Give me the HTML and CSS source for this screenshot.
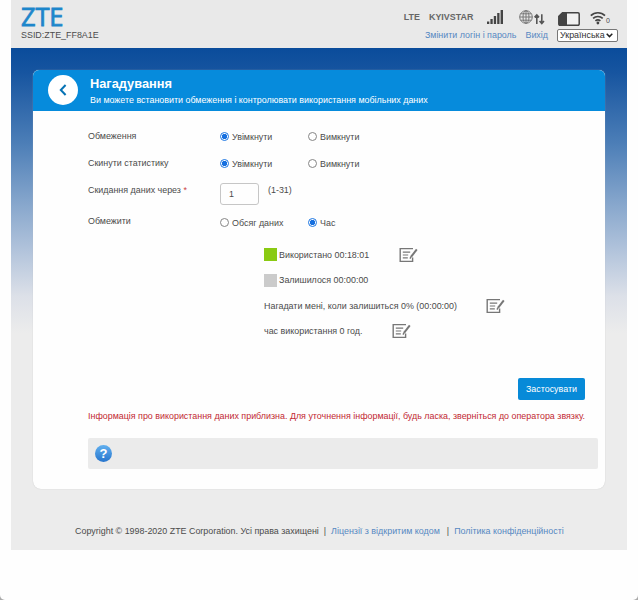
FILE: index.html
```html
<!DOCTYPE html>
<html lang="uk">
<head>
<meta charset="utf-8">
<title>ZTE</title>
<link rel="stylesheet" href="styles.css">
</head>
<body>
<svg class="defs" width="0" height="0">
  <symbol id="edit" viewBox="0 0 20 16">
    <g fill="none" stroke="#777" stroke-width="1.4">
      <path d="M14 1.6H1.2v12.8h12.4v-4"/>
      <path d="M3.8 5.2h7.4M3.8 8h5.4M3.8 10.9h5" stroke-width="1.2"/>
      <path d="M17.8 2.4l-5.6 7.2" stroke-width="2"/>
      <path d="M12.4 9.2l-1.4 2.4"/>
    </g>
  </symbol>
</svg>
<div class="page">
  <header class="top">
    <div class="brand">
      <div class="logo">ZTE</div>
      <div class="ssid">SSID:ZTE_FF8A1E</div>
    </div>
    <div class="tools">
      <div class="status">
        <span class="net">LTE</span>
        <span class="operator">KYIVSTAR</span>
        <svg class="signal" width="16" height="16" viewBox="0 0 16 16" fill="#444"><path d="M0 12.5h2.3V15H0zM3.4 10h2.3v5H3.4zM6.8 7h2.3v8H6.8zM10.2 4h2.3v11h-2.3zM13.6 1h2.4v14h-2.4z"/></svg>
        <svg class="globe" width="26" height="15" viewBox="0 0 26 15" fill="none" stroke="#777">
          <circle cx="7" cy="7" r="6.3"/><ellipse cx="7" cy="7" rx="3" ry="6.3"/><path d="M7 .7v12.6M.7 7h12.6M1.6 3.8h10.8M1.6 10.2h10.8"/>
          <path stroke="#555" stroke-width="1.6" d="M17.8 14V5M15.6 7.4l2.2-2.5 2.2 2.5M22.8 4.2v9M20.6 11l2.2 2.5 2.2-2.5"/>
        </svg>
        <svg class="sim" width="22" height="14" viewBox="0 0 22 14"><path d="M4.5.8H20a1.2 1.2 0 0 1 1.2 1.2v10a1.2 1.2 0 0 1-1.2 1.2H2A1.2 1.2 0 0 1 .8 12V4.3z" fill="#f1f1f1" stroke="#444" stroke-width="1.5"/><path d="M4.5.8H9v12.4H.8V4.3z" fill="#444"/></svg>
        <svg class="wifi" width="16" height="14" viewBox="0 0 16 14" fill="none" stroke="#444" stroke-width="1.7"><path d="M.8 4.7a10 10 0 0 1 14.2 0M3.1 7.4a7 7 0 0 1 9.6 0M5.4 9.9a4 4 0 0 1 5 0"/><circle cx="7.9" cy="12" r="1.4" fill="#444" stroke="none"/></svg>
        <span class="clients">0</span>
      </div>
      <div class="links">
        <a class="login">Змінити логін і пароль</a>
        <a class="exit">Вихід</a>
        <div class="lang"><span>Українська</span><svg width="7" height="5" viewBox="0 0 7 5" fill="none" stroke="#222" stroke-width="1.5"><path d="M.7.8l2.8 2.8L6.3.8"/></svg></div>
      </div>
    </div>
  </header>
  <main class="body">
    <section class="card">
      <div class="card-head">
        <div class="back"><svg width="8" height="12" viewBox="0 0 8 12" fill="none" stroke="#0673b5" stroke-width="2"><path d="M6.6 1L1.8 6l4.8 5"/></svg></div>
        <div>
          <h1>Нагадування</h1>
          <p class="sub">Ви можете встановити обмеження і контролювати використання мобільних даних</p>
        </div>
      </div>
      <div class="form">
        <div class="row"><span class="label">Обмеження</span><span class="opt"><i class="radio on"></i><span>Увімкнути</span></span><span class="opt"><i class="radio"></i><span>Вимкнути</span></span></div>
        <div class="row"><span class="label">Скинути статистику</span><span class="opt"><i class="radio on"></i><span>Увімкнути</span></span><span class="opt"><i class="radio"></i><span>Вимкнути</span></span></div>
        <div class="row row-day"><span class="label">Скидання даних через <b class="req">*</b></span><span class="field">1</span><span class="range">(1-31)</span></div>
        <div class="row row-limit"><span class="label">Обмежити</span><span class="opt"><i class="radio"></i><span class="data">Обсяг даних</span></span><span class="opt"><i class="radio on"></i><span>Час</span></span></div>
      </div>
      <div class="usage">
        <div class="line"><i class="swatch used"></i><span class="t1">Використано 00:18:01</span><svg class="edit" width="20" height="16"><use href="#edit"/></svg></div>
        <div class="line"><i class="swatch left"></i><span class="t1">Залишилося 00:00:00</span></div>
        <div class="line"><span class="t3">Нагадати мені, коли залишиться 0% (00:00:00)</span><svg class="edit" width="20" height="16"><use href="#edit"/></svg></div>
        <div class="line"><span class="t4">час використання 0 год.</span><svg class="edit" width="20" height="16"><use href="#edit"/></svg></div>
      </div>
      <div class="actions"><span class="apply">Застосувати</span></div>
      <p class="note">Інформація про використання даних приблизна. Для уточнення інформації, будь ласка, зверніться до оператора звязку.</p>
      <div class="help"><span class="question">?</span></div>
    </section>
    <footer class="foot">
      <span class="copy">Copyright © 1998-2020 ZTE Corporation. Усі права захищені</span><span class="bar">|</span><a class="licence">Ліцензії з відкритим кодом</a><span class="bar bar-two">|</span><a class="policy">Політика конфіденційності</a>
    </footer>
  </main>
</div>
</body>
</html>
```
FILE: styles.css
```css
* { box-sizing: border-box; }
html { background: #aaa; }
body {
  margin: 0;
  height: 600px;
  border-radius: 0 0 5px 5px;
  background: #fefefe;
  color: #4b4b4b;
  font: 8.92px/12px "Liberation Sans", Arial, sans-serif;
  white-space: nowrap;
  overflow: hidden;
}
h1, p { margin: 0; }
a { color: #5688c2; }
svg { display: block; flex: none; }
.defs { position: absolute; }
.page { width: 616px; margin-left: 11px; }

.top { height: 48px; background: #e9e9e9; display: flex; justify-content: space-between; padding: 0 9px 0 10px; }
.logo { font: 25.5px/24px "Open Sans", "Noto Sans", sans-serif; color: #1d86cb; -webkit-text-stroke: 0.8px #1d86cb; margin-top: 4px; height: 25px; letter-spacing: -0.2px; }
.status { display: flex; height: 28px; padding-top: 9px; justify-content: flex-end; }
.net, .operator { font-weight: bold; color: #666; line-height: 17px; }
.net { margin-right: 9px; }
.operator { width: 44px; margin-right: 14px; }
.globe { margin: 1px 13px 0 16px; }
.sim { margin: 3px 10px 0 0; }
.wifi { margin-top: 2px; }
.clients { font-size: 7px; line-height: 23px; width: 5px; margin-right: 7px; }
.links { display: flex; align-items: center; height: 14px; justify-content: flex-end; }
.exit { margin: 0 9px; }
.lang { width: 61px; height: 13px; border: 1px solid #777; border-radius: 2px; background: #fff; color: #333; display: flex; align-items: center; justify-content: space-between; padding: 0 4px 0 2px; }

.body { height: 502px; background: linear-gradient(#0a4c9b 0, #1755a0 25px, #4c7eb7 95px, #86a6cc 155px, #b4c5dc 205px, #dce0e8 248px, #ececec 285px); padding: 22px 22px 0; }
.card { height: 419px; background: #fefefe; border-radius: 6px 6px 8px 8px; box-shadow: 0 0 1px #bbb; }
.card-head { height: 41px; background: #068bdc; color: #fff; border-radius: 6px 6px 0 0; display: flex; padding-left: 15px; }
.back { width: 30px; height: 30px; margin: 5px 12px 0 0; border-radius: 50%; background: #fff; display: flex; align-items: center; justify-content: center; }
h1 { font-size: 12.8px; line-height: 16px; margin-top: 6px; }
.sub { margin-top: 2px; }

.form { padding: 12px 0 0 55px; }
.row { display: flex; height: 27px; }
.label { width: 132px; line-height: 26px; }
.opt { width: 88px; display: flex; align-items: center; gap: 3px; height: 27px; }
.opt span { line-height: 14px; padding-top: 1px; }
.radio { width: 9px; height: 9px; border: 1px solid #858585; border-radius: 50%; background: #fff; }
.radio.on { border-color: #1a75e2; background: radial-gradient(circle, #1770df 0 2.3px, #fff 3px); }
.row-day { height: 32px; }
.row-limit .label { line-height: 25px; }
.row-limit .opt { height: 26px; }
.req { color: #c44; font-weight: normal; }
.field { width: 39px; height: 22px; border: 1px solid #c6c6c6; border-radius: 3px; margin: 6px 9px 0 0; padding: 0 8px; line-height: 20px; }
.range { line-height: 26px; }

.usage { padding: 6px 0 0 231px; }
.line { display: flex; align-items: center; height: 25.5px; }
.swatch { width: 13px; height: 13px; margin-right: 2px; }
.used { background: #8aca12; }
.left { background: #cbcbcb; }
.t1 { width: 120px; }
.t3 { width: 222px; }
.t4 { width: 128px; }
.actions { display: flex; justify-content: flex-end; padding: 34px 20px 0 0; }
.apply { width: 67px; height: 22px; border-radius: 2px; background: #078ad8; color: #fff; text-align: center; line-height: 22px; }
.note { color: #c22932; margin: 10px 0 0 55px; line-height: 13px; }
.help { margin: 15px 7px 0 55px; height: 31px; background: #ebebeb; border-radius: 2px; padding: 7px; }
.question { display: block; width: 17px; height: 17px; border-radius: 50%; background: linear-gradient(#61b0ef, #2775cd); color: #fff; font: bold 13px/17px "Liberation Sans", sans-serif; text-align: center; }
.foot { display: flex; padding: 36px 0 0 42px; line-height: 12px; }
.bar { margin: 0 5px; }
.bar-two { margin-left: 7px; }
```
